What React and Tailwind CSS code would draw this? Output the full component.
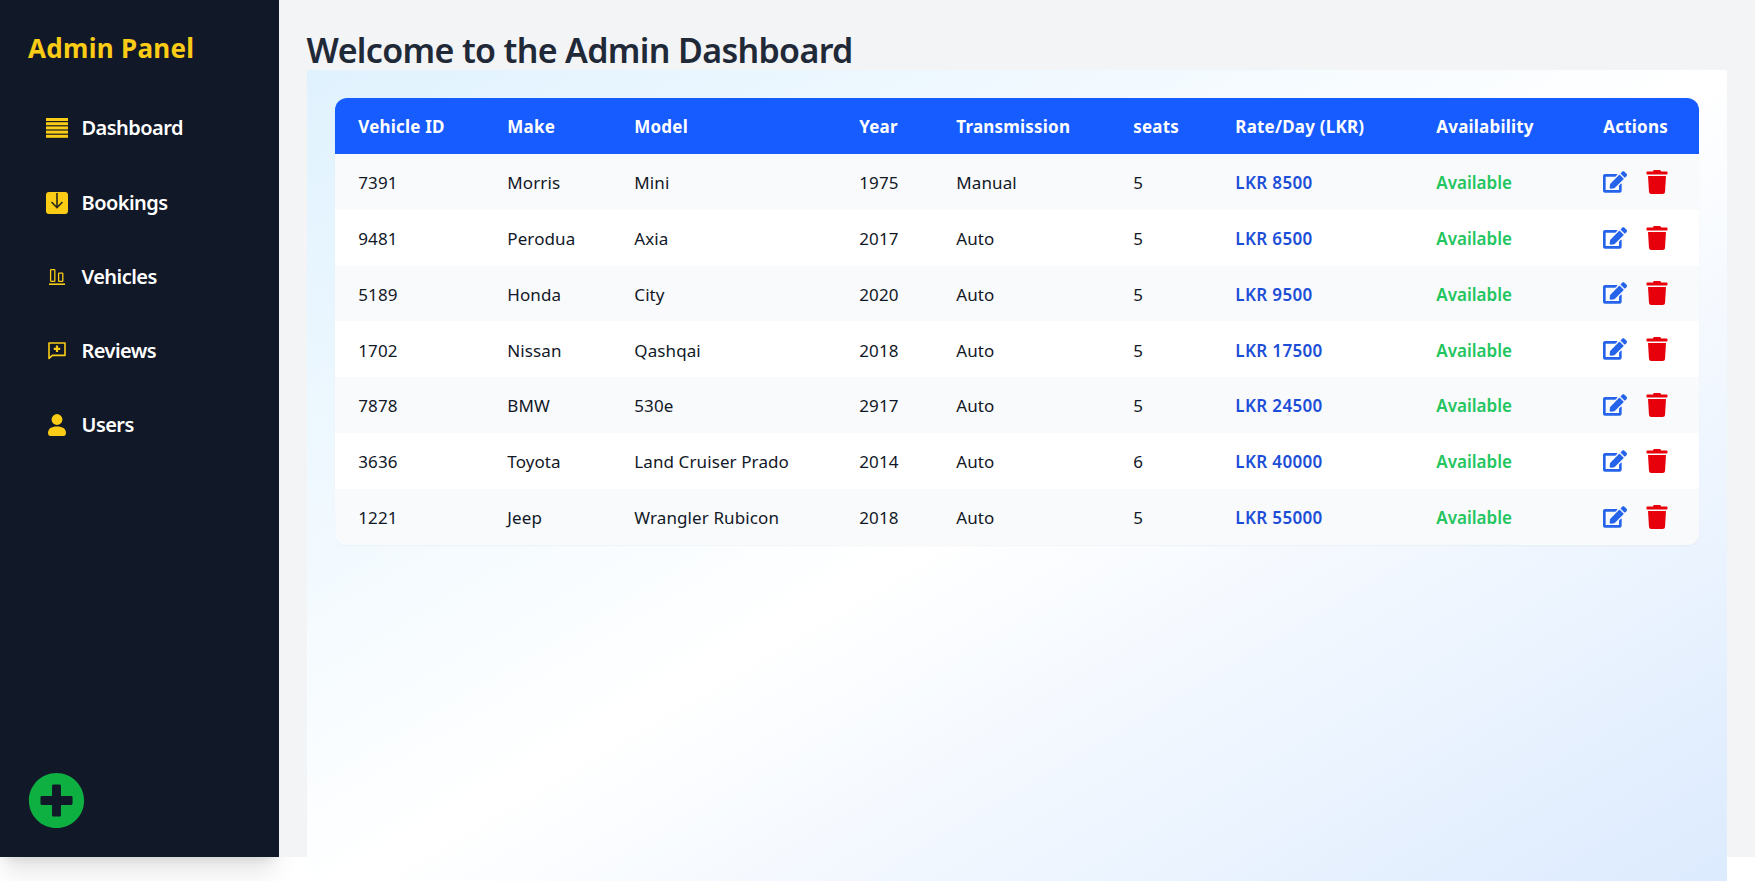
import React from "react";
import { FaEdit, FaTrash, FaPlusCircle } from "react-icons/fa";

const DashIcon = () => (
  <svg viewBox="0 0 22 20" className="w-[22px] h-[20px]" fill="#facc15">
    <rect x="0" y="0" width="22" height="3" />
    <rect x="0" y="4.2" width="22" height="3" />
    <rect x="0" y="8.4" width="22" height="3" />
    <rect x="0" y="12.6" width="22" height="3" />
    <rect x="0" y="16.8" width="22" height="3" />
  </svg>
);
const BookIcon = () => (
  <svg viewBox="0 0 22 22" className="w-[22px] h-[22px]">
    <rect x="0" y="0" width="22" height="22" rx="3" fill="#facc15" />
    <path d="M11 1V15M5.5 10l5.5 5.5 5.5-5.5" fill="none" stroke="#2a2a1a" strokeWidth="1.6" />
  </svg>
);
const VehicleIcon = () => (
  <svg viewBox="0 0 16 16" className="w-[16px] h-[16px]" fill="none" stroke="#facc15" strokeWidth="1.3">
    <rect x="1.6" y="0.7" width="4.2" height="11.6" rx="0.6" />
    <rect x="9.6" y="4.2" width="4.2" height="8.1" rx="0.6" />
    <path d="M0 15.2H16" strokeWidth="1.6" />
  </svg>
);
const ReviewIcon = () => (
  <svg viewBox="0 0 18 18" className="w-[18px] h-[18px]">
    <path d="M1 1h16v12.4H4.4L1 16.4Z" fill="none" stroke="#facc15" strokeWidth="1.6" strokeLinejoin="round" />
    <path d="M9 3.6v6.4M5.8 6.8h6.4" stroke="#facc15" strokeWidth="2.2" />
  </svg>
);
const UserIcon = () => (
  <svg viewBox="0 0 18 22" className="w-[18px] h-[22px]" fill="#facc15">
    <circle cx="9" cy="5.5" r="5.4" />
    <path d="M0 19c0-4.5 3.4-6.6 9-6.6s9 2.1 9 6.6c0 2-1 3-2.6 3H2.6C1 22 0 21 0 19Z" />
  </svg>
);

const nav = [
  ["Dashboard", <DashIcon />],
  ["Bookings", <BookIcon />],
  ["Vehicles", <VehicleIcon />],
  ["Reviews", <ReviewIcon />],
  ["Users", <UserIcon />],
];

const rows = [
  ["7391", "Morris", "Mini", "1975", "Manual", "5", "LKR 8500"],
  ["9481", "Perodua", "Axia", "2017", "Auto", "5", "LKR 6500"],
  ["5189", "Honda", "City", "2020", "Auto", "5", "LKR 9500"],
  ["1702", "Nissan", "Qashqai", "2018", "Auto", "5", "LKR 17500"],
  ["7878", "BMW", "530e", "2917", "Auto", "5", "LKR 24500"],
  ["3636", "Toyota", "Land Cruiser Prado", "2014", "Auto", "6", "LKR 40000"],
  ["1221", "Jeep", "Wrangler Rubicon", "2018", "Auto", "5", "LKR 55000"],
];

const heads = [
  ["Vehicle ID", "w-[149px]"],
  ["Make", "w-[127px]"],
  ["Model", "w-[225px]"],
  ["Year", "w-[97px]"],
  ["Transmission", "w-[177px]"],
  ["seats", "w-[102px]"],
  ["Rate/Day (LKR)", "w-[201px]"],
  ["Availability", "w-[167px]"],
  ["Actions", "w-[120px]"],
];

export default function App() {
  return (
    <div className="h-[881px] overflow-hidden bg-white font-['Noto_Sans',sans-serif]">
      <div className="flex h-[857px]">
        <aside className="w-[278.6px] shrink-0 bg-[#111827] shadow-xl flex flex-col pl-7 pb-7 pt-[28px]">
          <h1 className="text-[26px] leading-[40px] font-bold text-[#facc15] tracking-[0.3px]">Admin Panel</h1>
          <nav className="mt-[40.3px] flex flex-col gap-[34.3px] pl-[18px]">
            {nav.map(([label, icon]) => (
              <div key={label} className="flex items-center h-[40px] text-white text-[20px] font-semibold tracking-[-0.55px]">
                <span className="w-[22px] mr-[13.5px] flex items-center justify-center">{icon}</span>
                {label}
              </div>
            ))}
          </nav>
          <button className="mt-auto w-[57px] h-[57px] text-[#0eb042]">
            <FaPlusCircle size={57} />
          </button>
        </aside>
        <main className="flex-1 min-w-0 bg-[#f3f4f6] pl-7 pr-7 pt-[28px]">
          <h2 className="text-[34px] leading-[44px] font-semibold text-[#1f2937] tracking-[-0.67px] h-[42px]">Welcome to the Admin Dashboard</h2>
          <div className="h-[840px] p-7 bg-gradient-to-br from-[#e0f2fe] via-white to-[#dbeafe]">
            <div className="rounded-xl overflow-hidden shadow-[0_1px_2px_rgba(0,0,0,0.04)] bg-white">
              <table className="w-full table-fixed border-collapse text-[17px]">
                <thead className="bg-[#175cff] text-white">
                  <tr className="h-[56px]">
                    {heads.map(([h, w]) => (
                      <th key={h} className={`${w} pl-[23.7px] pt-[2px] text-left font-bold tracking-[0.2px]`}>{h}</th>
                    ))}
                  </tr>
                </thead>
                <tbody>
                  {rows.map((r, i) => (
                    <tr key={r[0]} className={`h-[55.8px] ${i % 2 === 0 ? "bg-[#f9fafb]" : "bg-white"}`}>
                      {r.slice(0, 6).map((c, j) => (
                        <td key={j} className="pl-[23.7px] pt-[2px] text-[#111827] tracking-[0.1px]">{c}</td>
                      ))}
                      <td className="pl-[23.7px] pt-[2px] font-semibold text-[#1d4ed8] tracking-[0.35px]">{r[6]}</td>
                      <td className="pl-[23.7px] pt-[2px] font-semibold text-[#22c55e]">Available</td>
                      <td className="pl-[23.7px]">
                        <div className="flex items-center gap-[18px]">
                          <FaEdit size={24} className="text-[#2563eb]" />
                          <FaTrash size={24} className="text-[#e7000b]" />
                        </div>
                      </td>
                    </tr>
                  ))}
                </tbody>
              </table>
            </div>
          </div>
        </main>
      </div>
    </div>
  );
}
